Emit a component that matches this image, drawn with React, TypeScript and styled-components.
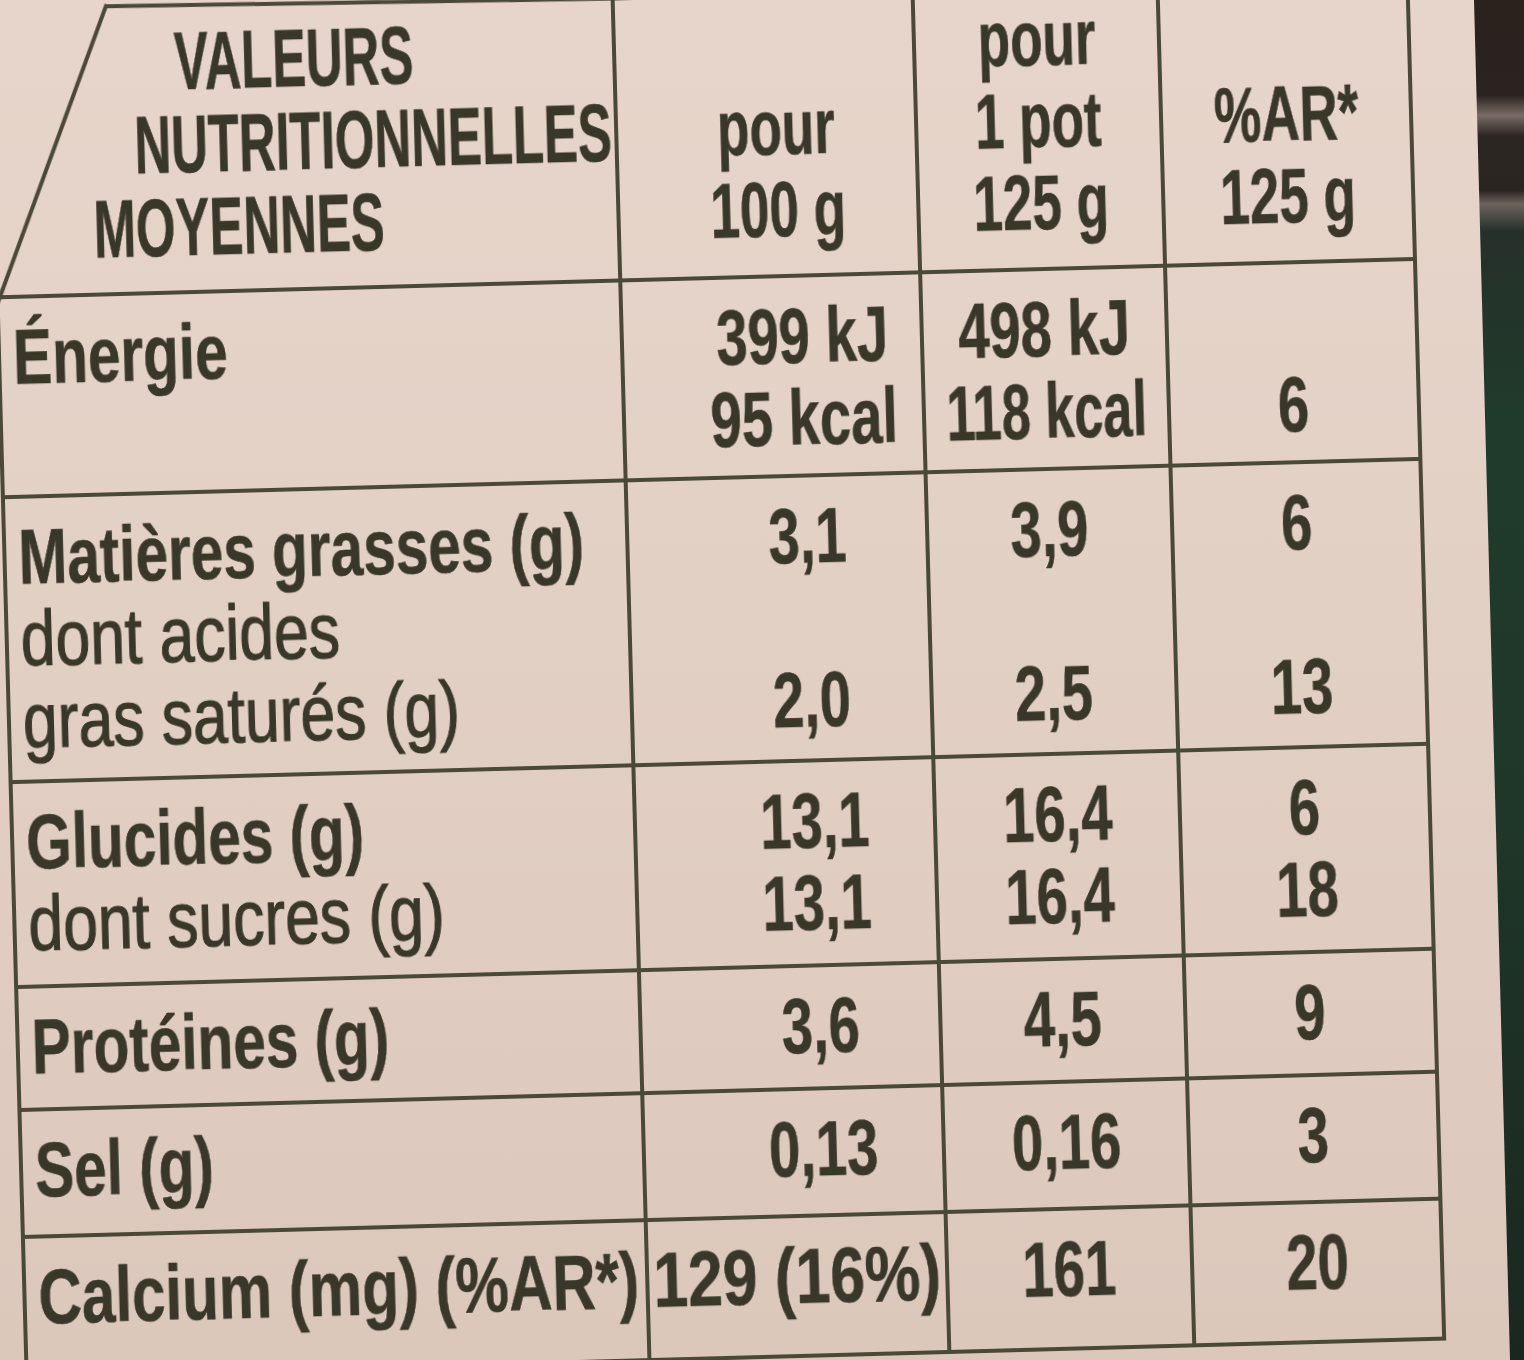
import React from 'react';
import styled, { createGlobalStyle } from 'styled-components';

const INK = '#383729';
const RULE = '#4a4837';

const GlobalStyle = createGlobalStyle`
  html, body {
    margin: 0;
    padding: 0;
  }
  body {
    background: #e2cfc4;
    overflow: hidden;
  }
  * {
    box-sizing: border-box;
  }
`;

const Page = styled.div`
  display: flex;
  width: 1524px;
  height: 1360px;
  overflow: hidden;
  background: linear-gradient(180deg, #e7d5cb 0%, #e3d0c5 45%, #dcc7bb 100%);
  font-family: "Liberation Sans", Arial, sans-serif;
  color: ${INK};
`;

const Paper = styled.div`
  flex: 1;
  padding-left: 6px;
  margin-top: -6px;
`;

const Edge = styled.div`
  flex: none;
  width: 50px;
  background: linear-gradient(
    180deg,
    #2b211d 0%,
    #2a2320 7%,
    #7a6b66 8.5%,
    #2c2622 10%,
    #2b2521 14%,
    #6d625d 15%,
    #26302a 17%,
    #203a2b 30%,
    #1f3829 55%,
    #1d2f25 80%,
    #1a2720 100%
  );
  clip-path: polygon(0 0, 100% 0, 100% 100%, 72% 100%);
`;

const Table = styled.div`
  display: grid;
  grid-template-columns: 627px 300px 245px 250px;
  grid-template-rows: 286px 200px 285px 205px 123px 127px 140px;
  width: 1422px;
  transform: rotate(-1.55deg);
  filter: blur(0.6px);
`;

const Cell = styled.div<{ $first?: boolean; $head?: boolean; $padLeft?: number }>`
  position: relative;
  display: flex;
  flex-direction: column;
  justify-content: ${p => (p.$head ? 'flex-end' : 'flex-start')};
  border-right: 4px solid ${RULE};
  border-bottom: 4px solid ${RULE};
  border-left: ${p => (p.$first && !p.$head ? `4px solid ${RULE}` : 'none')};
  border-top: ${p => (p.$head && !p.$first ? `4px solid ${RULE}` : 'none')};
  padding: ${p => (p.$head ? (p.$first ? '0 0 22px' : '0 0 24px') : '17px 0 0')};
  padding-left: ${p => p.$padLeft ?? 0}px;
`;

const Corner = styled.svg`
  position: absolute;
  left: 0;
  top: 0;
  width: 627px;
  height: 286px;
  overflow: visible;
  pointer-events: none;
`;

const Line = styled.div<{ $center?: boolean; $size: number; $lh: number; $indent?: number }>`
  display: flex;
  justify-content: ${p => (p.$center ? 'center' : 'flex-start')};
  height: ${p => p.$lh}px;
  padding-left: ${p => p.$indent ?? 0}px;
  font-size: ${p => p.$size}px;
  line-height: ${p => p.$lh}px;
  white-space: nowrap;
`;

const Squeeze = styled.span<{ $k: number; $center?: boolean; $light?: boolean }>`
  display: inline-block;
  flex: none;
  font-weight: ${p => (p.$light ? 400 : 700)};
  -webkit-text-stroke: ${p => (p.$light ? '1.2px' : '0.6px')} ${INK};
  transform: scaleX(${p => p.$k});
  transform-origin: ${p => (p.$center ? 'center' : 'left')} center;
`;

type Txt = { t: string; light?: boolean; k?: number };

type Row = {
  label: Txt[];
  values: Txt[][];
};

const b = (t: string, k?: number): Txt => ({ t, k });
const r = (t: string): Txt => ({ t, light: true });

const rows: Row[] = [
  {
    label: [b('Énergie')],
    values: [
      [b('399 kJ'), b('95 kcal')],
      [b('498 kJ'), b('118 kcal', 0.67)],
      [b(''), b('6')],
    ],
  },
  {
    label: [b('Matières grasses (g)'), r('dont acides'), r('gras saturés (g)')],
    values: [
      [b('3,1'), b(''), b('2,0')],
      [b('3,9'), b(''), b('2,5')],
      [b('6'), b(''), b('13')],
    ],
  },
  {
    label: [b('Glucides (g)'), r('dont sucres (g)')],
    values: [
      [b('13,1'), b('13,1')],
      [b('16,4'), b('16,4')],
      [b('6'), b('18')],
    ],
  },
  {
    label: [b('Protéines (g)')],
    values: [[b('3,6')], [b('4,5')], [b('9')]],
  },
  {
    label: [b('Sel (g)')],
    values: [[b('0,13')], [b('0,16')], [b('3')]],
  },
  {
    label: [b('Calcium (mg) (%AR*)', 0.77)],
    values: [[b('129 (16%)', 0.8)], [b('161')], [b('20')]],
  },
];

const headCols: { lines: string[]; padLeft: number }[] = [
  { lines: ['pour', '100 g'], padLeft: 20 },
  { lines: ['pour', '1 pot', '125 g'], padLeft: 0 },
  { lines: ['%AR*', '125 g'], padLeft: 0 },
];

const titleLines = [
  { t: 'VALEURS', indent: 185 },
  { t: 'NUTRITIONNELLES', indent: 143 },
  { t: 'MOYENNES', indent: 100 },
];

export default function App() {
  return (
    <>
      <GlobalStyle />
      <Page>
        <Paper>
          <Table>
            <Cell $first $head>
              <Corner viewBox="0 0 627 286">
                <line x1="2" y1="290" x2="119" y2="-6" stroke={RULE} strokeWidth="4" />
                <line x1="118" y1="-4" x2="627" y2="2" stroke={RULE} strokeWidth="4" />
              </Corner>
              {titleLines.map(l => (
                <Line key={l.t} $size={82} $lh={83} $indent={l.indent}>
                  <Squeeze $k={0.62}>{l.t}</Squeeze>
                </Line>
              ))}
            </Cell>
            {headCols.map((c, i) => (
              <Cell key={i} $head $padLeft={c.padLeft}>
                {c.lines.map(t => (
                  <Line key={t} $center $size={78} $lh={82}>
                    <Squeeze $k={0.68} $center>{t}</Squeeze>
                  </Line>
                ))}
              </Cell>
            ))}

            {rows.map((row, ri) => (
              <React.Fragment key={ri}>
                <Cell $first $padLeft={12}>
                  {row.label.map((l, li) => (
                    <Line key={li} $size={78} $lh={82}>
                      <Squeeze $k={l.k ?? (l.light ? 0.8 : 0.75)} $light={l.light}>{l.t}</Squeeze>
                    </Line>
                  ))}
                </Cell>
                {row.values.map((col, ci) => (
                  <Cell key={ci} $padLeft={ci === 0 && ri !== 5 ? 60 : 0}>
                    {col.map((v, vi) => (
                      <Line key={vi} $center $size={78} $lh={82}>
                        <Squeeze $k={v.k ?? 0.72} $center>{v.t}</Squeeze>
                      </Line>
                    ))}
                  </Cell>
                ))}
              </React.Fragment>
            ))}
          </Table>
        </Paper>
        <Edge />
      </Page>
    </>
  );
}
